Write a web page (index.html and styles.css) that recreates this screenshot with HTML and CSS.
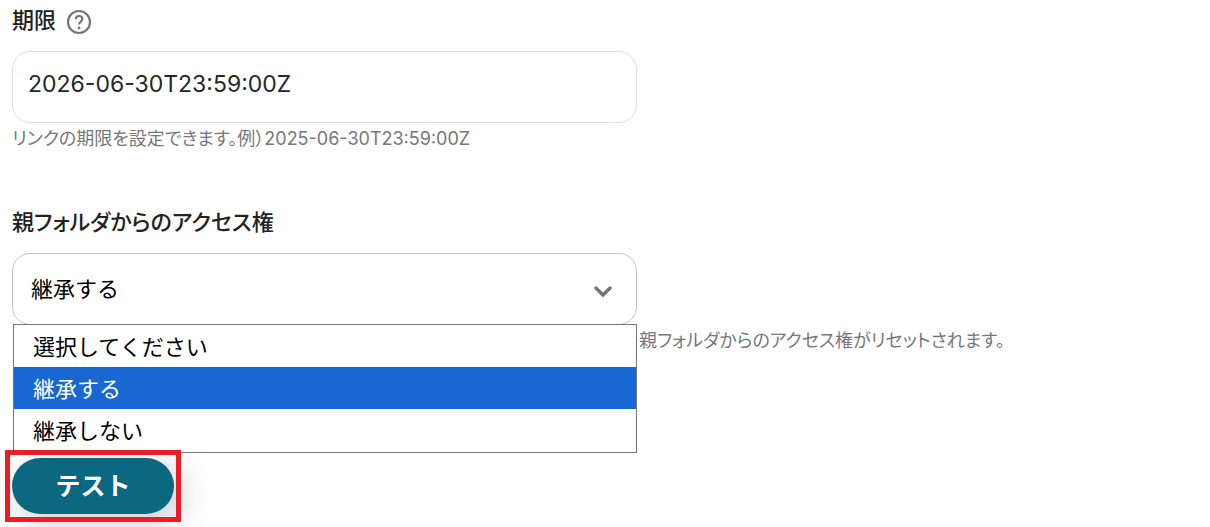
FILE: index.html
```html
<!DOCTYPE html>
<html lang="ja">
<head>
    <meta charset="UTF-8">
    <meta name="viewport" content="width=device-width, initial-scale=1.0">
    <title>テスト</title>
    <link rel="stylesheet" href="styles.css">
</head>
<body>
    <form class="settings-form">
        <div class="field">
            <div class="field-label">
                <label for="expire">期限</label>
                <svg class="help-icon" viewBox="0 0 26 26" aria-hidden="true">
                    <circle cx="13" cy="13" r="11"/>
                    <path d="M9.8 10.2c0-1.9 1.4-3.2 3.3-3.2s3.2 1.2 3.2 2.9c0 2.5-3.2 2.7-3.2 5.6"/>
                    <circle class="dot" cx="13" cy="19" r="1.4"/>
                </svg>
            </div>
            <input type="text" id="expire" class="control" value="2026-06-30T23:59:00Z">
            <p class="hint">リンクの期限を設定できます。例）2025-06-30T23:59:00Z</p>
        </div>

        <div class="field">
            <div class="field-label">
                <label for="access">親フォルダからのアクセス権</label>
            </div>
            <div class="select-box">
                <select id="access" class="control">
                    <option>選択してください</option>
                    <option selected>継承する</option>
                    <option>継承しない</option>
                </select>
                <svg class="chevron" viewBox="0 0 18 12" aria-hidden="true">
                    <path d="M2 2l7 7 7-7"/>
                </svg>
                <ul class="options" role="listbox" aria-label="親フォルダからのアクセス権">
                    <li role="option">選択してください</li>
                    <li role="option" class="selected" aria-selected="true">継承する</li>
                    <li role="option">継承しない</li>
                </ul>
            </div>
            <p class="hint hint-side">親フォルダからのアクセス権がリセットされます。</p>
        </div>

        <div class="submit">
            <button type="submit">テスト</button>
        </div>
    </form>
</body>
</html>
```
FILE: styles.css
```css
* {
    box-sizing: border-box;
}

body {
    --field-width: 625px;
    margin: 0;
    padding: 0 12px 13px;
    font-family: Inter, "Noto Sans CJK JP", sans-serif;
    font-size: 22px;
    color: #222;
    background-color: #fff;
}

.settings-form {
    display: flex;
    flex-direction: column;
}

.field {
    height: 202px;
}

.field-label {
    display: flex;
    align-items: center;
    gap: 10px;
    height: 36px;
    margin-bottom: 15px;
    font-weight: 500;
    font-feature-settings: "palt";
}

.help-icon {
    width: 26px;
    height: 26px;
    margin-top: 8px;
    fill: none;
    stroke: #757575;
    stroke-width: 2.2;
}

.help-icon .dot {
    fill: #757575;
    stroke: none;
}

.control {
    display: block;
    width: 100%;
    max-width: var(--field-width);
    height: 72px;
    padding: 0 15px 6px;
    border: 1px solid #dcdfe6;
    border-radius: 18px;
    background-color: #fff;
    font: inherit;
    font-size: 23px;
    color: #23272b;
}

.hint {
    margin: 4px 0 0;
    font-size: 18px;
    line-height: 24px;
    color: #777;
    font-feature-settings: "palt";
}

.hint-side {
    margin-left: calc(var(--field-width) + 2px);
}

.select-box {
    position: relative;
    max-width: var(--field-width);
}

select.control {
    appearance: none;
    padding-left: 18px;
    padding-bottom: 0;
    border-color: #c4c4c4;
    font-size: 22px;
    color: #000;
}

.chevron {
    position: absolute;
    top: 33px;
    right: 25px;
    width: 18px;
    height: 12px;
    fill: none;
    stroke: #757575;
    stroke-width: 3.4;
    stroke-linecap: round;
}

.options {
    position: absolute;
    z-index: 1;
    top: 71px;
    left: 1px;
    right: 0;
    margin: 0;
    padding: 0 0 1px;
    border: 1px solid #767676;
    background-color: #fff;
    color: #000;
    list-style: none;
}

.options li {
    padding: 2px 19px 0;
    line-height: 40px;
}

.options .selected {
    background-color: #1967d2;
    color: #fff;
}

.submit {
    position: relative;
    align-self: flex-start;
    margin-top: 54px;
}

.submit::after {
    content: "";
    position: absolute;
    z-index: 2;
    inset: -8px -7px;
    border: 5px solid #ed1c24;
    pointer-events: none;
}

.submit button {
    display: block;
    width: 162px;
    height: 56px;
    padding: 0 0 4px;
    border: 0;
    border-radius: 28px;
    background-color: #0b6880;
    box-shadow: 8px 8px 32px rgba(30, 40, 70, 0.25);
    color: #fff;
    font: inherit;
    font-size: 25px;
    font-weight: 700;
    cursor: pointer;
}
```
